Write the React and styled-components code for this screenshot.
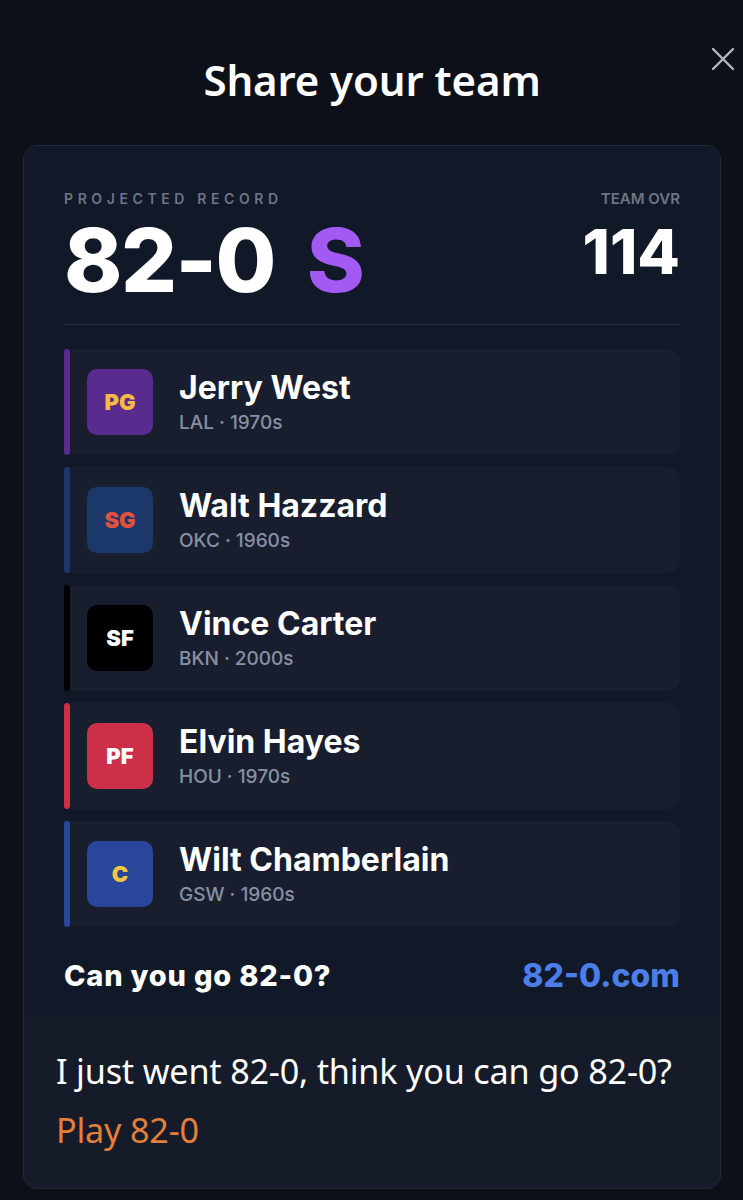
import React from "react";
import styled, { createGlobalStyle } from "styled-components";

const GlobalStyle = createGlobalStyle`
	* {
		box-sizing: border-box;
	}
	body {
		margin: 0;
		background: #0d1019;
		font-family: "Inter", "Noto Sans", sans-serif;
		color: #ffffff;
	}
`;

const players = [
	{ pos: "PG", name: "Jerry West", team: "LAL", era: "1970s", bar: "#5a2b8e", bg: "#5a2b8e", fg: "#f6b941" },
	{ pos: "SG", name: "Walt Hazzard", team: "OKC", era: "1960s", bar: "#1c3769", bg: "#1c3769", fg: "#e0523e" },
	{ pos: "SF", name: "Vince Carter", team: "BKN", era: "2000s", bar: "#000000", bg: "#000000", fg: "#ffffff" },
	{ pos: "PF", name: "Elvin Hayes", team: "HOU", era: "1970s", bar: "#cc3048", bg: "#cc3048", fg: "#ffffff" },
	{ pos: "C", name: "Wilt Chamberlain", team: "GSW", era: "1960s", bar: "#28479a", bg: "#28479a", fg: "#f3c640" },
];

const App = () => {
	return (
		<Page>
			<GlobalStyle />
			<Header>
				<Title>Share your team</Title>
				<CloseButton aria-label="Close">
					<svg width="24" height="24" viewBox="0 0 24 24" fill="none">
						<path d="M2 2L22 22M22 2L2 22" stroke="#b4b7bf" strokeWidth="2.4" strokeLinecap="round" />
					</svg>
				</CloseButton>
			</Header>
			<Card>
				<ShareImage>
					<RecordRow>
						<div>
							<Label $spaced>PROJECTED RECORD</Label>
							<Record>
								82-0 <Grade>S</Grade>
							</Record>
						</div>
						<OvrBlock>
							<Label>TEAM OVR</Label>
							<Ovr>114</Ovr>
						</OvrBlock>
					</RecordRow>
					<Divider />
					<PlayerList>
						{players.map((p) => (
							<PlayerRow key={p.pos}>
								<Accent $color={p.bar} />
								<PlayerBody>
									<Badge $bg={p.bg} $fg={p.fg}>
										{p.pos}
									</Badge>
									<div>
										<PlayerName>{p.name}</PlayerName>
										<PlayerMeta>
											{p.team} · {p.era}
										</PlayerMeta>
									</div>
								</PlayerBody>
							</PlayerRow>
						))}
					</PlayerList>
					<Footer>
						<Question>Can you go 82-0?</Question>
						<Site>82-0.com</Site>
					</Footer>
				</ShareImage>
				<Message>
					<MessageText>I just went 82-0, think you can go 82-0?</MessageText>
					<PlayLink href="#">Play 82-0</PlayLink>
				</Message>
			</Card>
		</Page>
	);
};

export default App;

const Page = styled.div`
	width: 743px;
	min-height: 1200px;
	padding: 0 22px 8px 23px;
	background: #0d1019;
`;

const Header = styled.div`
	position: relative;
	height: 145px;
	display: flex;
	justify-content: center;
	padding-top: 52px;
`;

const Title = styled.h1`
	margin: 0;
	font-family: "Noto Sans", sans-serif;
	font-weight: 600;
	font-size: 42px;
	line-height: 56px;
	letter-spacing: -0.1px;
	color: #ffffff;
`;

const CloseButton = styled.button`
	position: absolute;
	top: 47px;
	right: -14px;
	width: 24px;
	height: 24px;
	padding: 0;
	border: none;
	background: none;
	cursor: pointer;
`;

const Card = styled.div`
	border: 1px solid #242a39;
	border-radius: 14px;
	overflow: hidden;
	background: #161b29;
`;

const ShareImage = styled.div`
	background: #111828;
	padding: 45px 40px 24px;
`;

const RecordRow = styled.div`
	display: flex;
	justify-content: space-between;
`;

const Label = styled.div`
	font-size: ${(p) => (p.$spaced ? "14px" : "15px")};
	line-height: 16px;
	font-weight: 600;
	color: #6e7587;
	letter-spacing: ${(p) => (p.$spaced ? "4.6px" : "0")};
`;

const Record = styled.div`
	margin-top: 9px;
	font-size: 88px;
	line-height: 88px;
	font-weight: 800;
	letter-spacing: -1.5px;
	color: #ffffff;
`;

const Grade = styled.span`
	margin-left: 14px;
	color: #a25af3;
`;

const OvrBlock = styled.div`
	display: flex;
	flex-direction: column;
	align-items: flex-end;
`;

const Ovr = styled.div`
	margin-top: 15px;
	font-size: 62px;
	line-height: 60px;
	font-weight: 800;
	letter-spacing: 0;
	color: #ffffff;
`;

const Divider = styled.div`
	height: 1px;
	margin: 20px 0 24px;
	background: #262d3d;
`;

const PlayerList = styled.div`
	display: flex;
	flex-direction: column;
	gap: 12px;
`;

const PlayerRow = styled.div`
	display: flex;
	height: 106px;
`;

const Accent = styled.div`
	width: 6px;
	border-radius: 3px;
	background: ${(p) => p.$color};
`;

const PlayerBody = styled.div`
	flex: 1;
	display: flex;
	align-items: center;
	gap: 26px;
	padding-left: 17px;
	background: #191e2e;
	border-radius: 3px 12px 12px 3px;
`;

const Badge = styled.div`
	width: 66px;
	height: 66px;
	border-radius: 10px;
	display: flex;
	align-items: center;
	justify-content: center;
	background: ${(p) => p.$bg};
	color: ${(p) => p.$fg};
	font-size: 22px;
	font-weight: 900;
`;

const PlayerName = styled.div`
	font-size: 32px;
	line-height: 36px;
	font-weight: 700;
	letter-spacing: 0;
	color: #ffffff;
`;

const PlayerMeta = styled.div`
	margin-top: 6px;
	font-size: 19px;
	line-height: 22px;
	font-weight: 500;
	color: #8790a5;
`;

const Footer = styled.div`
	display: flex;
	justify-content: space-between;
	align-items: center;
	margin-top: 32px;
	height: 32px;
`;

const Question = styled.div`
	font-size: 29px;
	font-weight: 800;
	letter-spacing: 0.8px;
	color: #ffffff;
`;

const Site = styled.div`
	font-size: 32px;
	font-weight: 800;
	letter-spacing: 0;
	color: #4b7ee6;
`;

const Message = styled.div`
	padding: 34px 32px 36px;
	background: #161b29;
`;

const MessageText = styled.p`
	margin: 0;
	font-family: "Noto Sans", sans-serif;
	font-size: 34.2px;
	line-height: 44px;
	letter-spacing: -0.2px;
	color: #ffffff;
`;

const PlayLink = styled.a`
	display: block;
	margin-top: 15px;
	font-family: "Noto Sans", sans-serif;
	font-size: 34.2px;
	line-height: 44px;
	letter-spacing: -0.2px;
	color: #e27f3a;
	text-decoration: none;
`;
